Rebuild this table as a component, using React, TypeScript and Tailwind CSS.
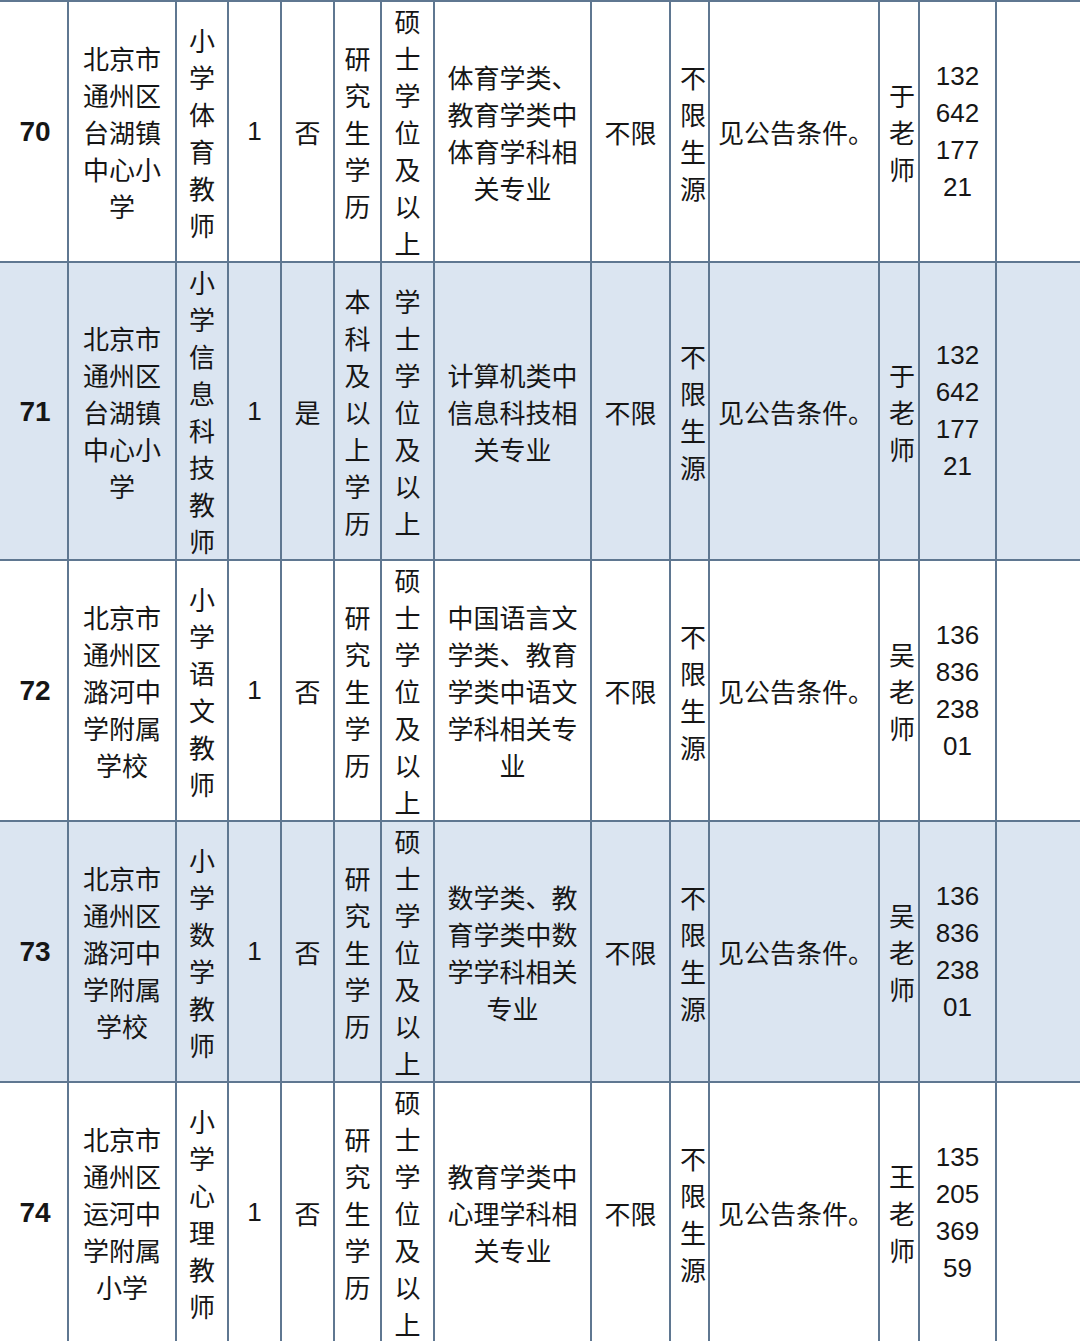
import React from 'react'

/**
 * Recruitment table fragment (rows 70–74)
 */

type Row = {
  no: string
  school: string[]
  post: string[]
  count: string
  flag: string
  edu: string[]
  degree: string[]
  major: string[]
  contact: string[]
  phone: string[]
  band?: boolean
}

const split = (s: string) => s.split('')

const rows: Row[] = [
  {
    no: '70',
    school: ['北京市', '通州区', '台湖镇', '中心小', '学'],
    post: split('小学体育教师'),
    count: '1',
    flag: '否',
    edu: split('研究生学历'),
    degree: split('硕士学位及以上'),
    major: ['体育学类、', '教育学类中', '体育学科相', '关专业'],
    contact: split('于老师'),
    phone: ['132', '642', '177', '21'],
  },
  {
    no: '71',
    school: ['北京市', '通州区', '台湖镇', '中心小', '学'],
    post: split('小学信息科技教师'),
    count: '1',
    flag: '是',
    edu: split('本科及以上学历'),
    degree: split('学士学位及以上'),
    major: ['计算机类中', '信息科技相', '关专业'],
    contact: split('于老师'),
    phone: ['132', '642', '177', '21'],
    band: true,
  },
  {
    no: '72',
    school: ['北京市', '通州区', '潞河中', '学附属', '学校'],
    post: split('小学语文教师'),
    count: '1',
    flag: '否',
    edu: split('研究生学历'),
    degree: split('硕士学位及以上'),
    major: ['中国语言文', '学类、教育', '学类中语文', '学科相关专', '业'],
    contact: split('吴老师'),
    phone: ['136', '836', '238', '01'],
  },
  {
    no: '73',
    school: ['北京市', '通州区', '潞河中', '学附属', '学校'],
    post: split('小学数学教师'),
    count: '1',
    flag: '否',
    edu: split('研究生学历'),
    degree: split('硕士学位及以上'),
    major: ['数学类、教', '育学类中数', '学学科相关', '专业'],
    contact: split('吴老师'),
    phone: ['136', '836', '238', '01'],
    band: true,
  },
  {
    no: '74',
    school: ['北京市', '通州区', '运河中', '学附属', '小学'],
    post: split('小学心理教师'),
    count: '1',
    flag: '否',
    edu: split('研究生学历'),
    degree: split('硕士学位及以上'),
    major: ['教育学类中', '心理学科相', '关专业'],
    contact: split('王老师'),
    phone: ['135', '205', '369', '59'],
  },
]

const widths = [68, 108, 52, 53, 53, 47, 53, 157, 79, 39, 170, 40, 77, 84]

const Lines = ({ lines }: { lines: string[] }) => (
  <>
    {lines.map((l, i) => (
      <div key={i}>{l}</div>
    ))}
  </>
)

const cell =
  'p-0 align-middle text-center whitespace-nowrap border-2 border-[#5f7791] first:border-l-0 last:border-r-0'

export default function App() {
  return (
    <div className="w-[1080px] overflow-hidden bg-white">
      <table
        className="w-[1080px] table-fixed border-collapse text-[26px] leading-[37px] text-[#161616]"
        style={{ fontFamily: '"Noto Sans CJK SC", "Noto Sans", sans-serif' }}
      >
        <colgroup>
          {widths.map((w, i) => (
            <col key={i} style={{ width: w }} />
          ))}
        </colgroup>
        <tbody>
          {rows.map((r) => (
            <tr key={r.no} className={r.band ? 'bg-[#dbe5f1]' : 'bg-white'}>
              <td className={`${cell} pl-[3px] font-['Liberation_Sans',sans-serif] text-[28px] font-bold`}>
                {r.no}
              </td>
              <td className={cell}>
                <Lines lines={r.school} />
              </td>
              <td className={cell}>
                <Lines lines={r.post} />
              </td>
              <td className={`${cell} font-['Liberation_Sans',sans-serif]`}>{r.count}</td>
              <td className={cell}>{r.flag}</td>
              <td className={cell}>
                <Lines lines={r.edu} />
              </td>
              <td className={cell}>
                <Lines lines={r.degree} />
              </td>
              <td className={cell}>
                <Lines lines={r.major} />
              </td>
              <td className={cell}>不限</td>
              <td className={`${cell} text-right pr-[2px]`}>
                <Lines lines={split('不限生源')} />
              </td>
              <td className={`${cell} text-left pl-2`}>见公告条件。</td>
              <td className={`${cell} text-right pr-[3px]`}>
                <Lines lines={r.contact} />
              </td>
              <td className={`${cell} font-['Liberation_Sans',sans-serif]`}>
                <Lines lines={r.phone} />
              </td>
              <td className={cell} />
            </tr>
          ))}
        </tbody>
      </table>
    </div>
  )
}
